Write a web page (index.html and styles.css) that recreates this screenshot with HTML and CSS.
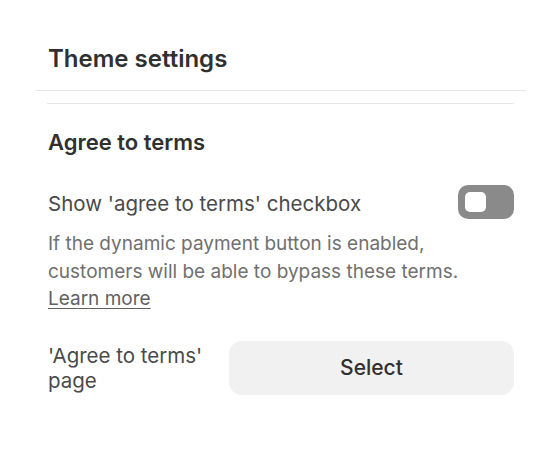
FILE: index.html
```html
<!DOCTYPE html>
<html lang="en">
<head>
    <meta charset="UTF-8">
    <meta name="viewport" content="width=device-width, initial-scale=1.0">
    <title>Theme settings</title>
    <link rel="stylesheet" href="styles.css">
</head>
<body>
    <div class="panel">
        <div class="panel-header">
            <h1 class="panel-title">Theme settings</h1>
        </div>

        <div class="section">
            <h2 class="section-title">Agree to terms</h2>

            <div class="setting-row">
                <span class="setting-label">Show 'agree to terms' checkbox</span>
                <button class="toggle" aria-label="Toggle checkbox"><span class="toggle-knob"></span></button>
            </div>

            <p class="setting-help">
                If the dynamic payment button is enabled, customers will be able to bypass these terms.
                <a href="#" class="help-link">Learn more</a>
            </p>

            <div class="picker-row">
                <span class="picker-label">'Agree to terms' page</span>
                <button class="picker-button">Select</button>
            </div>
        </div>
    </div>
</body>
</html>
```

FILE: styles.css
```css
body {
    margin: 0;
    background-color: #ffffff;
    font-family: Inter, "Noto Sans", sans-serif;
    color: #303030;
}

.panel {
    width: 559px;
}

.panel-header {
    margin: 0 33px 0 36px;
    padding: 45px 0 17px 12px;
    border-bottom: 1px solid #e6e6e6;
}

.panel-title {
    margin: 0;
    font-size: 24px;
    font-weight: 600;
    line-height: 28px;
    color: #303030;
}

.section {
    margin: 12px 45px 0 47px;
    padding: 24px 0 0 1px;
    border-top: 1px solid #e6e6e6;
}

.section-title {
    margin: 0;
    font-size: 22px;
    font-weight: 600;
    line-height: 28px;
    color: #303030;
}

.setting-row {
    display: flex;
    justify-content: space-between;
    align-items: center;
    margin-top: 29px;
}

.setting-label {
    font-size: 20.5px;
    line-height: 28px;
    color: #4a4a4a;
    padding-top: 3px;
}

.toggle {
    position: relative;
    width: 56px;
    height: 34px;
    border: none;
    border-radius: 10px;
    background-color: #8a8a8a;
    padding: 0;
    cursor: pointer;
}

.toggle-knob {
    position: absolute;
    left: 7px;
    top: 7px;
    width: 21px;
    height: 20px;
    border-radius: 5px;
    background-color: #ffffff;
}

.setting-help {
    margin: 11px 0 0;
    font-size: 19px;
    line-height: 27.5px;
    color: #707070;
    padding-right: 40px;
}

.help-link {
    color: #616161;
    text-decoration: underline;
    text-underline-offset: 3px;
}

.picker-row {
    display: flex;
    align-items: center;
    gap: 13px;
    margin-top: 28px;
}

.picker-label {
    flex: 0 0 168px;
    font-size: 20.5px;
    line-height: 25px;
    color: #4a4a4a;
}

.picker-button {
    flex: 1;
    height: 54px;
    border: none;
    border-radius: 13px;
    background-color: #f1f1f1;
    font-family: Inter, "Noto Sans", sans-serif;
    font-size: 21px;
    font-weight: 500;
    color: #303030;
    cursor: pointer;
}
```
